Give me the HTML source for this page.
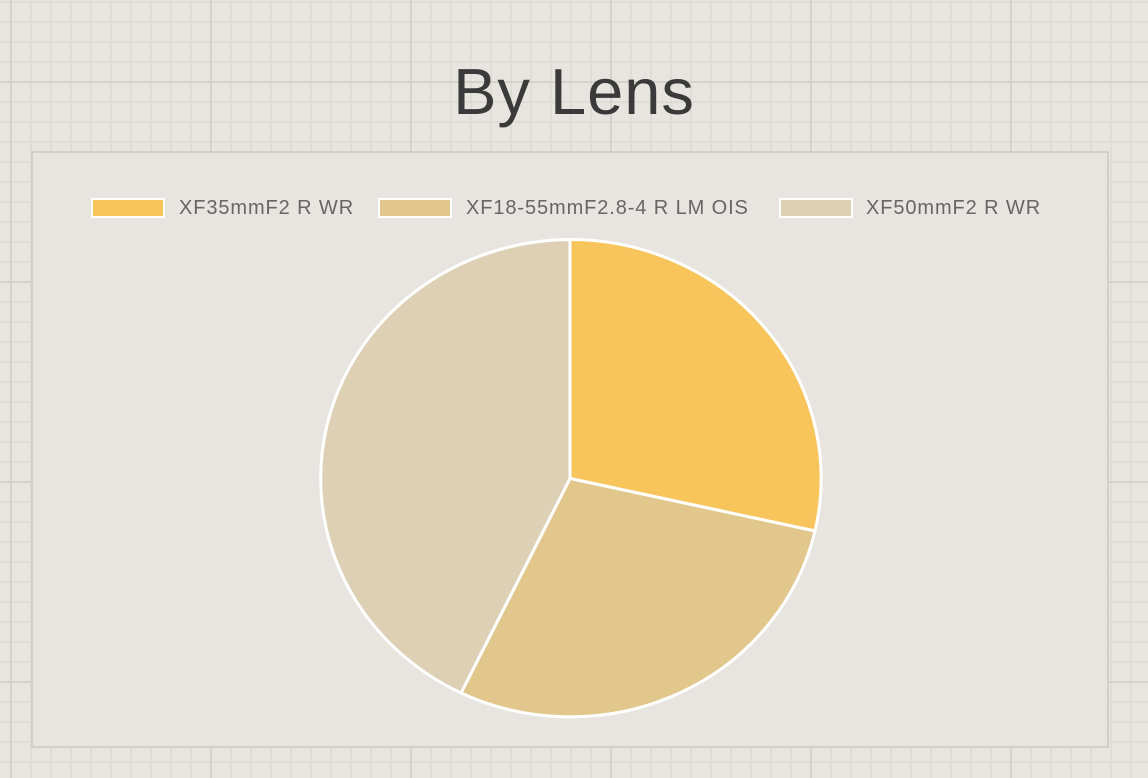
<!DOCTYPE html>
<html><head><style>
html,body{margin:0;padding:0;}
body{width:1148px;height:778px;overflow:hidden;background-color:#e8e5e0;
background-image:
linear-gradient(to right, #d6d2cb 0 2px, transparent 2px),
linear-gradient(to bottom, #d6d2cb 0 2px, transparent 2px),
linear-gradient(to right, #dfdbd5 0 2px, transparent 2px),
linear-gradient(to bottom, #dfdbd5 0 2px, transparent 2px);
background-size:200px 200px,200px 200px,20px 20px,20px 20px;
background-position:10px 0,0 81px,10px 0,0 1px;
font-family:"Liberation Sans",sans-serif;position:relative;}
h1{position:absolute;left:0;width:1148px;top:52px;margin:0;text-align:center;font-weight:300;font-size:65px;color:#3a3a3a;letter-spacing:1px;line-height:80px;}
.box{position:absolute;left:31px;top:151px;width:1074px;height:593px;border:2px solid #d3cfc4;background:#e8e5e0;}
.sw{position:absolute;top:198px;width:70px;height:16px;border:2px solid #fff;}
.lt{position:absolute;top:196px;font-size:20px;line-height:24px;letter-spacing:0.9px;color:#666;white-space:nowrap;}
</style></head><body>
<h1>By Lens</h1>
<div class="box"></div>
<div class="sw" style="left:91px;background:#f7c55b"></div><div class="lt" style="left:179px">XF35mmF2 R WR</div>
<div class="sw" style="left:378px;background:#e1c78b"></div><div class="lt" style="left:466px">XF18-55mmF2.8-4 R LM OIS</div>
<div class="sw" style="left:779px;background:#ddd0b5"></div><div class="lt" style="left:866px">XF50mmF2 R WR</div>
<svg width="1148" height="778" style="position:absolute;left:0;top:0">
<g stroke="#fff" stroke-width="3" stroke-linejoin="round">
<path d="M570,478.5 L570,239.5 A251,239 0 0 1 815,531 Z" fill="#f7c55b"/>
<path d="M570,478.5 L815,531 A251,239 0 0 1 461,693 Z" fill="#e1c78b"/>
<path d="M570,478.5 L461,693 A251,239 0 0 1 570,239.5 Z" fill="#ddd0b5"/>
</g>
</svg>
</body></html>
